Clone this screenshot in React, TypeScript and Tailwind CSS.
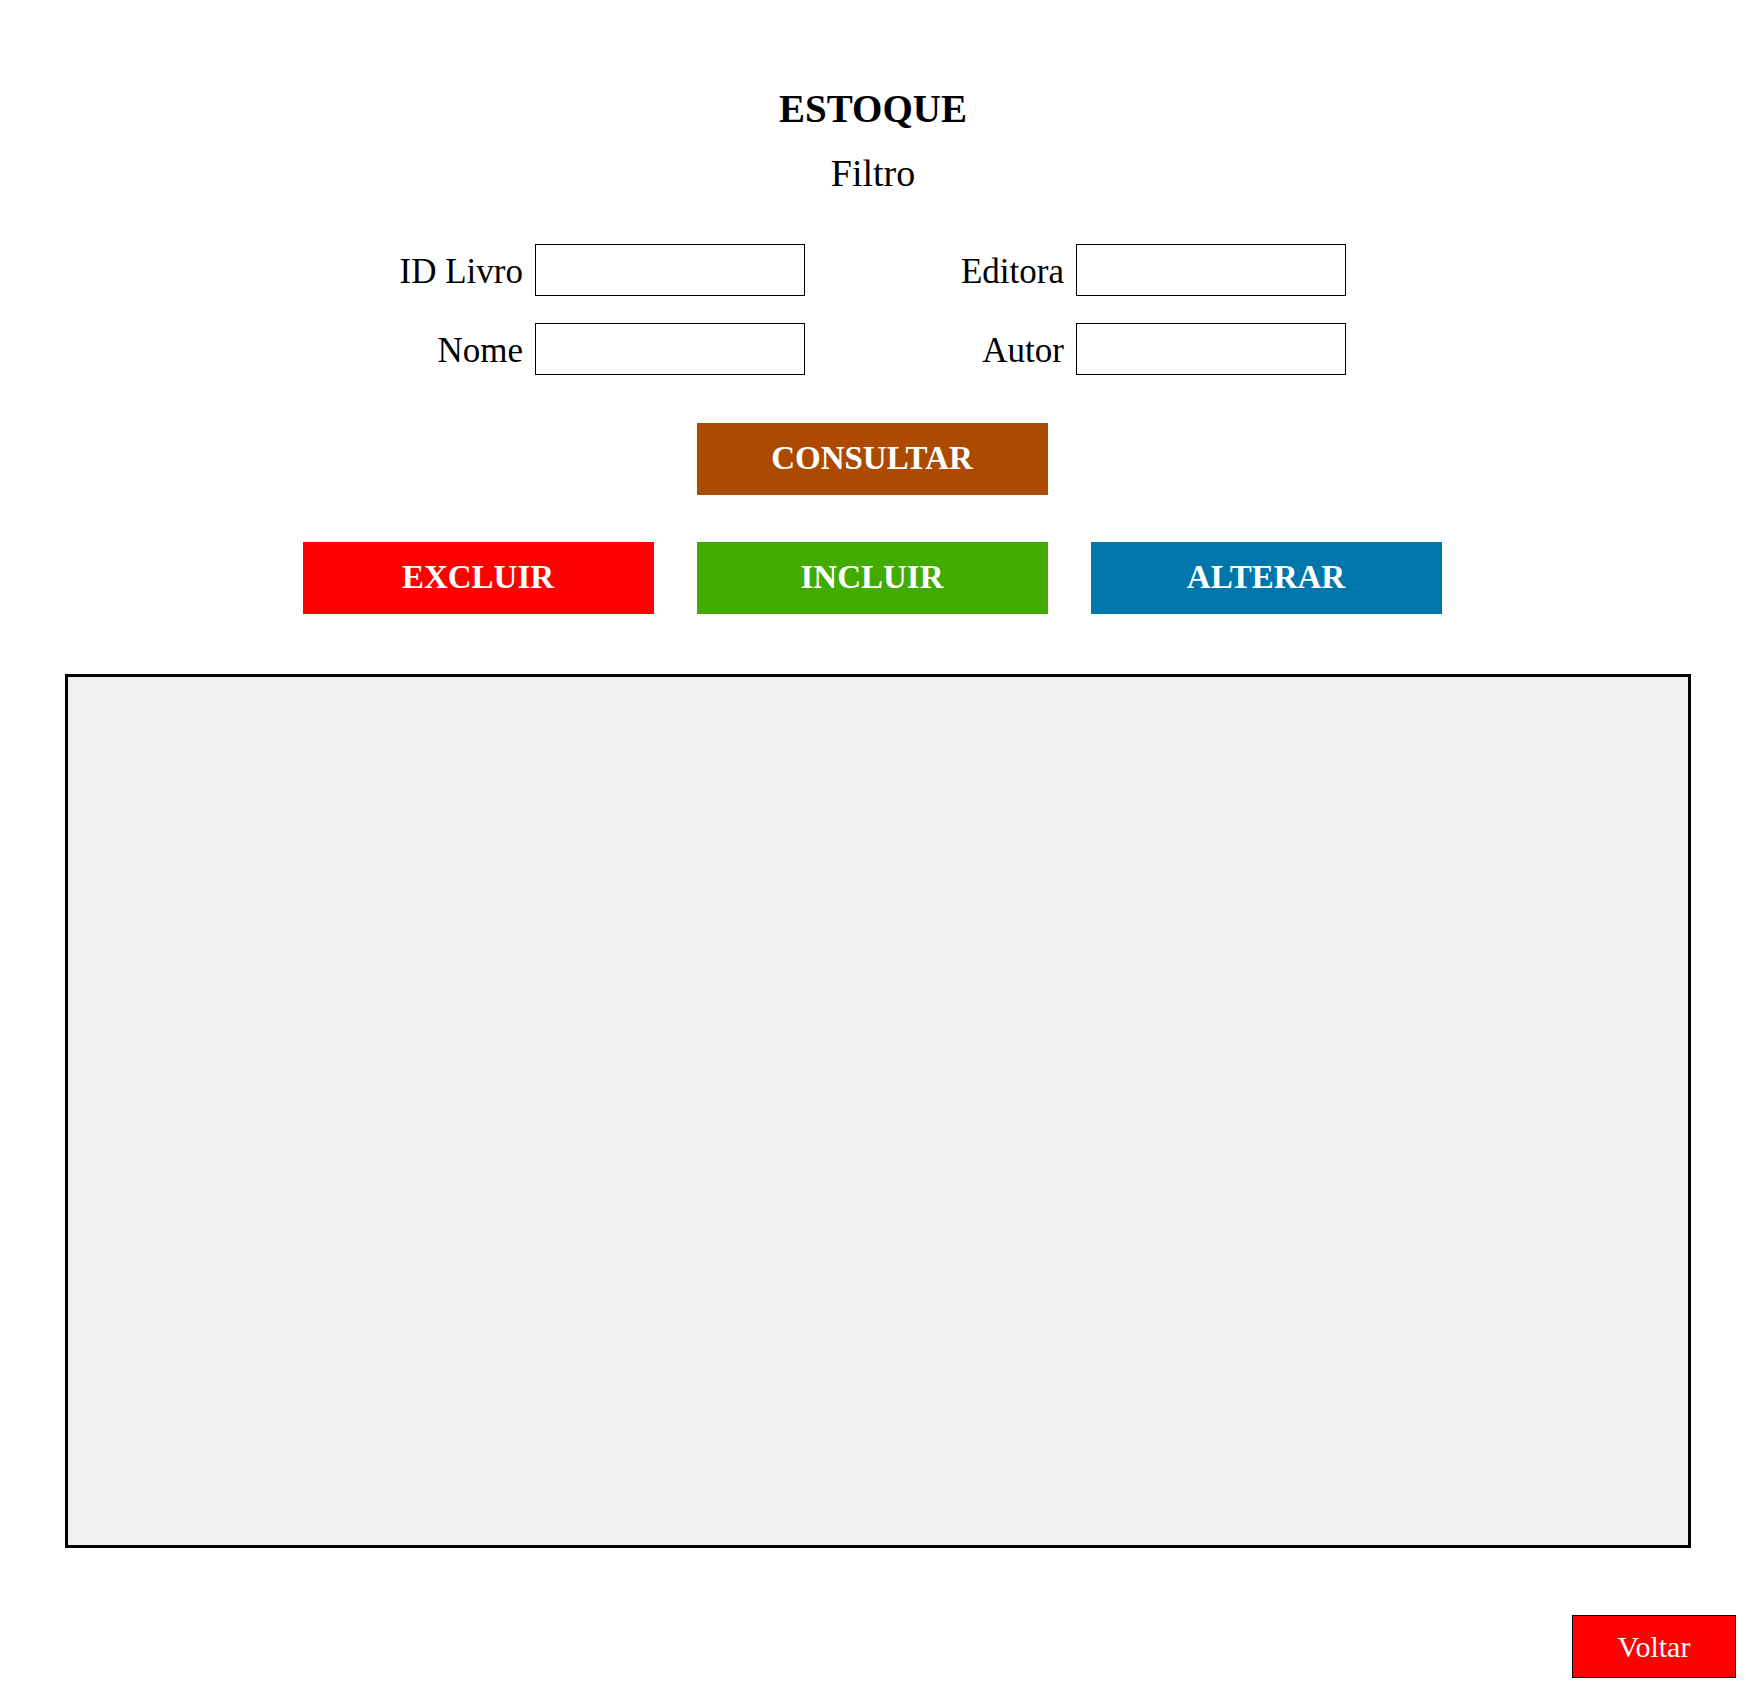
const fields = [
  { label: "ID Livro" },
  { label: "Editora" },
  { label: "Nome" },
  { label: "Autor" },
];

const actions = [
  { label: "EXCLUIR", color: "bg-[#ff0000]" },
  { label: "INCLUIR", color: "bg-[#41ab00]" },
  { label: "ALTERAR", color: "bg-[#0077ab]" },
];

const App = () => {
  return (
    <div className="min-h-screen bg-white text-black font-['Liberation_Serif','Times_New_Roman',serif] pt-[86px] pb-[19px]">
      {/* Cabeçalho */}
      <h1 className="text-center text-[39px] leading-[45px] font-bold">ESTOQUE</h1>
      <h2 className="mt-[20px] text-center text-[38px] leading-[45px] font-normal">Filtro</h2>

      {/* Filtros */}
      <div className="mx-auto mt-[48px] grid w-[946px] grid-cols-[135px_270px_271px_270px] gap-y-[27px]">
        {fields.map((f, i) => (
          <div key={i} className="contents">
            <label className="flex items-center justify-end whitespace-nowrap pt-1 pr-3 text-[35px] leading-[40px]">{f.label}</label>
            <input type="text" className="h-[52px] w-[270px] border border-black bg-white outline-none" />
          </div>
        ))}
      </div>

      <div className="mt-[48px] flex justify-center pr-[2px]">
        <button className="h-[72px] w-[351px] bg-[#ab4a00] text-[33px] font-bold text-white">CONSULTAR</button>
      </div>

      <div className="mt-[47px] flex justify-center gap-[43px] pr-[2px]">
        {actions.map((a) => (
          <button key={a.label} className={`h-[72px] w-[351px] ${a.color} text-[33px] font-bold text-white`}>
            {a.label}
          </button>
        ))}
      </div>

      {/* Resultado */}
      <div className="mt-[60px] ml-[65px] h-[874px] w-[1626px] border-[3px] border-black bg-[#f2f2f2]" />

      <div className="mt-[67px] flex justify-end pr-[10px]">
        <button className="h-[63px] w-[164px] border border-black bg-[#ff0000] text-[30px] text-white">Voltar</button>
      </div>
    </div>
  );
};

export default App;
